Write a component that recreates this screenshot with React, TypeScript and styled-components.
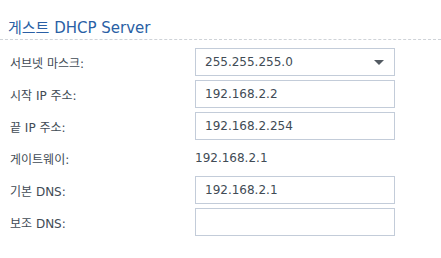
import { Fragment } from "react";
import styled, { createGlobalStyle } from "styled-components";

const Global = createGlobalStyle`
  html, body { margin: 0; padding: 0; background: #fff; }
  body {
    font-family: "DejaVu Sans", "Noto Sans CJK KR", sans-serif;
    color: #414b55;
  }
`;

const Panel = styled.section`
  width: 441px;
`;

const Title = styled.h2`
  margin: 0;
  height: 40px;
  padding: 19px 8px 0;
  box-sizing: border-box;
  font-size: 15px;
  line-height: 18px;
  font-weight: normal;
  color: #2a5fa5;
  border-bottom: 1px dashed #cfd3d8;
`;

const Form = styled.div`
  display: grid;
  grid-template-columns: 185px 200px;
  row-gap: 4px;
  padding: 8px 0 0 10px;
`;

const Label = styled.div`
  font-size: 12px;
  height: 28px;
  display: flex;
  align-items: center;
`;

const Field = styled.div<{ $plain?: boolean }>`
  position: relative;
  height: 28px;
  box-sizing: border-box;
  border: ${(p) => (p.$plain ? "none" : "1px solid #c3ccd9")};
  padding-left: ${(p) => (p.$plain ? "0" : "9px")};
  display: flex;
  align-items: center;
  font-size: 12px;
  color: #414b55;
  background: #fff;
`;

const Arrow = styled.span`
  position: absolute;
  right: 10px;
  top: 11px;
  width: 0;
  height: 0;
  border-left: 5px solid transparent;
  border-right: 5px solid transparent;
  border-top: 5px solid #535a62;
`;

const rows: { label: string; value: string; kind: "select" | "input" | "text" }[] = [
  { label: "서브넷 마스크:", value: "255.255.255.0", kind: "select" },
  { label: "시작 IP 주소:", value: "192.168.2.2", kind: "input" },
  { label: "끝 IP 주소:", value: "192.168.2.254", kind: "input" },
  { label: "게이트웨이:", value: "192.168.2.1", kind: "text" },
  { label: "기본 DNS:", value: "192.168.2.1", kind: "input" },
  { label: "보조 DNS:", value: "", kind: "input" },
];

export default function App() {
  return (
    <>
      <Global />
      <Panel>
        <Title>게스트 DHCP Server</Title>
        <Form>
          {rows.map((r) => (
            <Fragment key={r.label}>
              <Label>{r.label}</Label>
              <Field $plain={r.kind === "text"}>
                {r.value}
                {r.kind === "select" && <Arrow />}
              </Field>
            </Fragment>
          ))}
        </Form>
      </Panel>
    </>
  );
}
